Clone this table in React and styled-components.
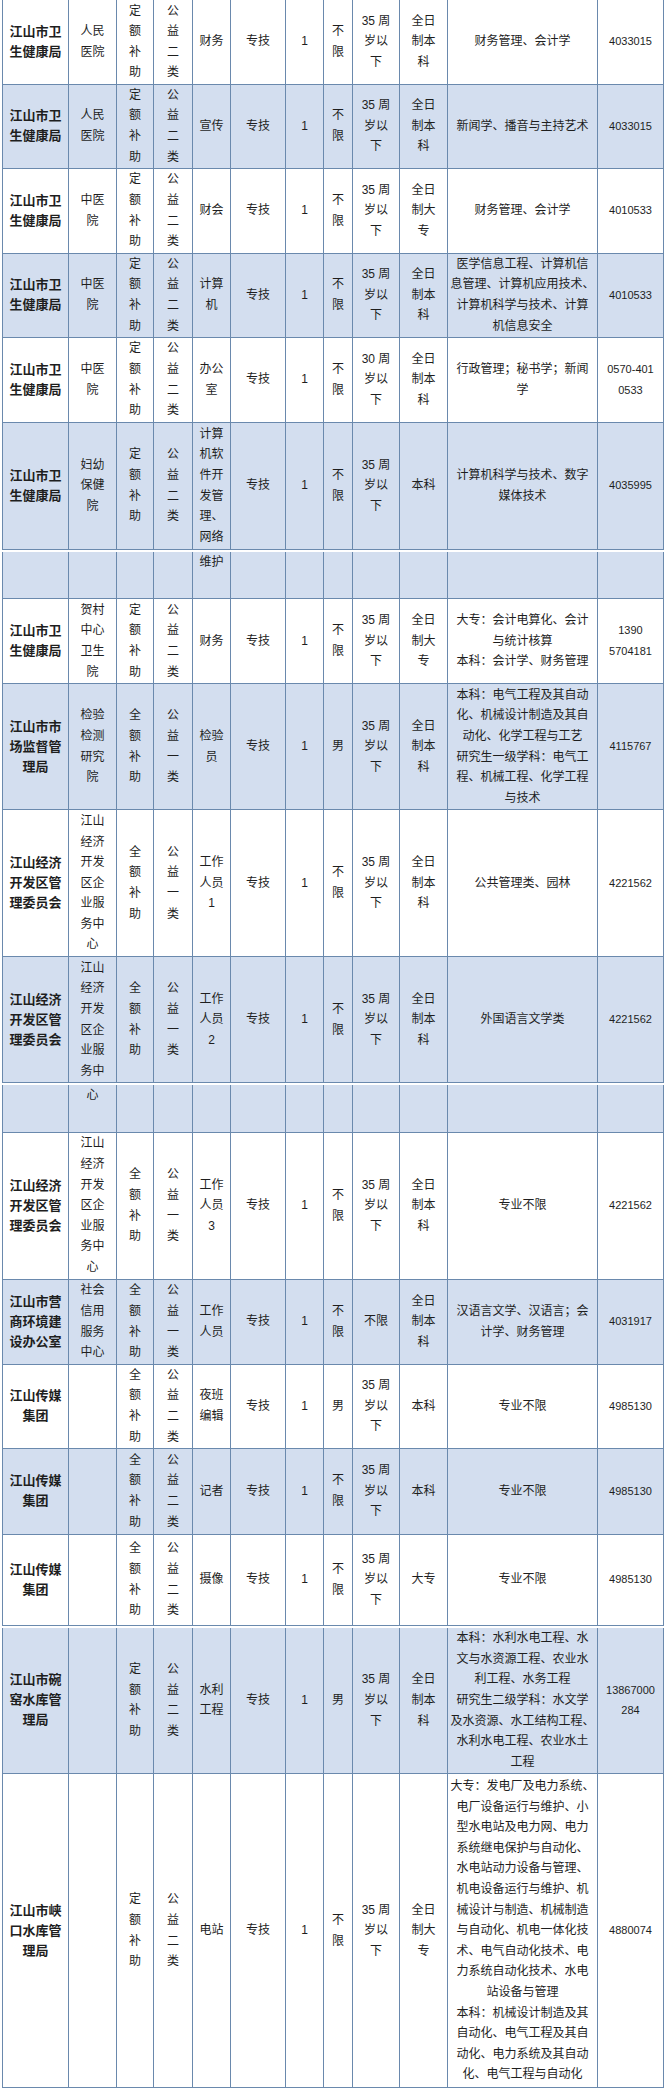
import React from 'react';
import styled, { createGlobalStyle } from 'styled-components';

const GlobalStyle = createGlobalStyle`
  body {
    margin: 0;
    background: #ffffff;
  }
`;

const LINE = '#6a89ad';
const BLUE = '#d3deef';

const Sheet = styled.div`
  display: flex;
  flex-direction: column;
  gap: 2px;
  padding-left: 2px;
  width: 662px;
`;

const Page = styled.table`
  width: 662px;
  border-collapse: collapse;
  table-layout: fixed;
  font-family: "Liberation Sans", "Noto Sans CJK SC", sans-serif;
  color: #1e1e1e;
`;

const Row = styled.tr`
  height: ${p => p.$h}px;
  background: ${p => (p.$blue ? BLUE : '#ffffff')};
`;

const Cell = styled.td`
  border: 1px solid ${LINE};
  border-top: none;
  padding: 0;
  text-align: center;
  vertical-align: ${p => (p.$top ? 'top' : 'middle')};
  white-space: pre;
  font-size: 12px;
  line-height: 20.6px;
  overflow: visible;
`;

const OrgCell = styled(Cell)`
  font-size: 13px;
  font-weight: 700;
  line-height: 20px;
`;

const PhoneCell = styled(Cell)`
  font-size: 11px;
`;

const WIDTHS = [66, 48, 37, 39, 38, 55, 38, 29, 47, 48, 150, 66];

const WJ = '江山市卫\n生健康局';
const JK = '江山经济\n开发区管\n理委员会';
const CM = '江山传媒\n集团';
const D = '定\n额\n补\n助';
const Q = '全\n额\n补\n助';
const G1 = '公\n益\n一\n类';
const G2 = '公\n益\n二\n类';
const BX = '不\n限';
const AGE = '35 周\n岁以\n下';
const QB = '全日\n制本\n科';
const QD = '全日\n制大\n专';
const CENTER = '江山\n经济\n开发\n区企\n业服\n务中';

const r = (h, blue, cells) => ({ h, blue, cells });
const cont = (h, blue, col, text) => ({ h, blue, cont: { col, text } });

const PAGES = [
  [
    r(84, false, [WJ, '人民\n医院', D, G2, '财务', '专技', '1', BX, AGE, QB, '财务管理、会计学', '4033015']),
    r(84, true, [WJ, '人民\n医院', D, G2, '宣传', '专技', '1', BX, AGE, QB, '新闻学、播音与主持艺术', '4033015']),
    r(85, false, [WJ, '中医\n院', D, G2, '财会', '专技', '1', BX, AGE, QD, '财务管理、会计学', '4010533']),
    r(84, true, [WJ, '中医\n院', D, G2, '计算\n机', '专技', '1', BX, AGE, QB,
      '医学信息工程、计算机信\n息管理、计算机应用技术、\n计算机科学与技术、计算\n机信息安全', '4010533']),
    r(85, false, [WJ, '中医\n院', D, G2, '办公\n室', '专技', '1', BX, '30 周\n岁以\n下', QB,
      '行政管理；秘书学；新闻\n学', '0570-401\n0533']),
    r(127, true, [WJ, '妇幼\n保健\n院', D, G2, '计算\n机软\n件开\n发管\n理、\n网络', '专技', '1', BX, AGE, '本科',
      '计算机科学与技术、数字\n媒体技术', '4035995']),
  ],
  [
    cont(47, true, 4, '维护'),
    r(85, false, [WJ, '贺村\n中心\n卫生\n院', D, G2, '财务', '专技', '1', BX, AGE, QD,
      '大专：会计电算化、会计\n与统计核算\n本科：会计学、财务管理', '1390\n5704181']),
    r(126, true, ['江山市市\n场监督管\n理局', '检验\n检测\n研究\n院', Q, G1, '检验\n员', '专技', '1', '男', AGE, QB,
      '本科：电气工程及其自动\n化、机械设计制造及其自\n动化、化学工程与工艺\n研究生一级学科：电气工\n程、机械工程、化学工程\n与技术', '4115767']),
    r(147, false, [JK, CENTER + '\n心', Q, G1, '工作\n人员\n1', '专技', '1', BX, AGE, QB, '公共管理类、园林', '4221562']),
    r(126, true, [JK, CENTER, Q, G1, '工作\n人员\n2', '专技', '1', BX, AGE, QB, '外国语言文学类', '4221562']),
  ],
  [
    cont(47, true, 1, '心'),
    r(147, false, [JK, CENTER + '\n心', Q, G1, '工作\n人员\n3', '专技', '1', BX, AGE, QB, '专业不限', '4221562']),
    r(85, true, ['江山市营\n商环境建\n设办公室', '社会\n信用\n服务\n中心', Q, G1, '工作\n人员', '专技', '1', BX, '不限', QB,
      '汉语言文学、汉语言；会\n计学、财务管理', '4031917']),
    r(84, false, [CM, '', Q, G2, '夜班\n编辑', '专技', '1', '男', AGE, '本科', '专业不限', '4985130']),
    r(86, true, [CM, '', Q, G2, '记者', '专技', '1', BX, AGE, '本科', '专业不限', '4985130']),
    r(91, false, [CM, '', Q, G2, '摄像', '专技', '1', BX, AGE, '大专', '专业不限', '4985130']),
  ],
  [
    r(146, true, ['江山市碗\n窑水库管\n理局', '', D, G2, '水利\n工程', '专技', '1', '男', AGE, QB,
      '本科：水利水电工程、水\n文与水资源工程、农业水\n利工程、水务工程\n研究生二级学科：水文学\n及水资源、水工结构工程、\n水利水电工程、农业水土\n工程', '13867000\n284']),
    r(314, false, ['江山市峡\n口水库管\n理局', '', D, G2, '电站', '专技', '1', BX, AGE, QD,
      '大专：发电厂及电力系统、\n电厂设备运行与维护、小\n型水电站及电力网、电力\n系统继电保护与自动化、\n水电站动力设备与管理、\n机电设备运行与维护、机\n械设计与制造、机械制造\n与自动化、机电一体化技\n术、电气自动化技术、电\n力系统自动化技术、水电\n站设备与管理\n本科：机械设计制造及其\n自动化、电气工程及其自\n动化、电力系统及其自动\n化、电气工程与自动化', '4880074']),
  ],
];

const renderCells = row => {
  if (row.cont) {
    return WIDTHS.map((w, i) => (
      <Cell key={i} $top>{i === row.cont.col ? row.cont.text : ''}</Cell>
    ));
  }
  return row.cells.map((text, i) => {
    if (i === 0) return <OrgCell key={i}>{text}</OrgCell>;
    if (i === 11) return <PhoneCell key={i}>{text}</PhoneCell>;
    return <Cell key={i}>{text}</Cell>;
  });
};

const App = () => {
  return (
    <>
      <GlobalStyle />
      <Sheet>
        {PAGES.map((rows, p) => (
          <Page key={p}>
            <colgroup>
              {WIDTHS.map((w, i) => <col key={i} style={{ width: w }} />)}
            </colgroup>
            <tbody>
              {rows.map((row, i) => (
                <Row key={i} $h={row.h} $blue={row.blue}>
                  {renderCells(row)}
                </Row>
              ))}
            </tbody>
          </Page>
        ))}
      </Sheet>
    </>
  );
};

export default App;
